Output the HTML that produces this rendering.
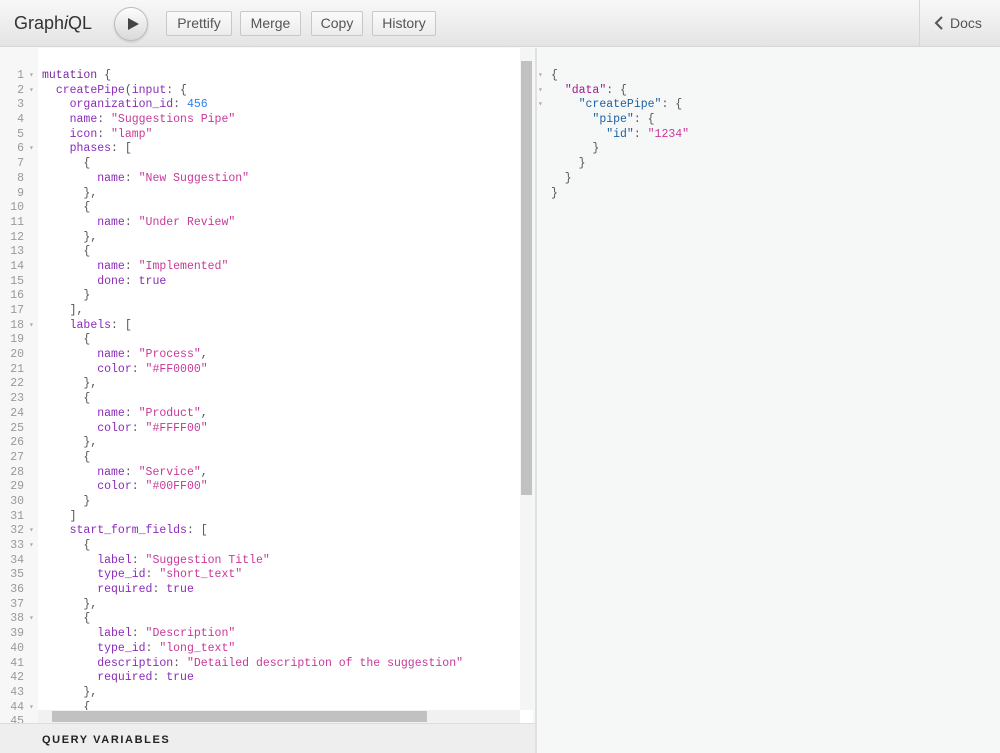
<!DOCTYPE html>
<html><head><style>
*{margin:0;padding:0;box-sizing:border-box}
body{width:1000px;height:753px;overflow:hidden;background:#f6f7f7;font-family:"Liberation Sans",sans-serif;position:relative}
.top{position:absolute;left:0;top:0;width:1000px;height:47px;background:linear-gradient(#f8f8f8,#e4e4e4);border-bottom:1px solid #d6d6d6}
.title{position:absolute;left:14px;top:13px;font-size:18px;color:#333}
.run{position:absolute;left:114px;top:7px;width:34px;height:34px;border-radius:50%;background:linear-gradient(#fdfdfd,#d9d9d9);border:1px solid #bbb;box-shadow:0 1px 2px rgba(0,0,0,.15)}
.run:after{content:"";position:absolute;left:13px;top:10px;border-left:11px solid #444;border-top:6.5px solid transparent;border-bottom:6.5px solid transparent}
.btn{position:absolute;top:11px;height:25px;border:1px solid #c8c8c8;background:linear-gradient(#fbfbfb,#ececec);font-size:14px;color:#555;line-height:23px;text-align:center;border-radius:2px}
.docs{position:absolute;left:919px;top:0;width:81px;height:47px;border-left:1px solid #d6d6d6;font-size:14px;color:#555;line-height:47px;padding-left:14px}
.gut{position:absolute;left:0;top:48px;width:38px;height:675px;background:#f7f7f7}
.ed{position:absolute;left:38px;top:48px;width:495px;height:675px;background:#fff}
.code{position:absolute;top:69px;font-family:"Liberation Mono",monospace;font-size:11.5px;line-height:14.68px;white-space:pre}
.ln{left:0;width:24px;text-align:right;color:#999}
.fd{left:29px;color:#aaa;font-size:8px}
.src{left:42px;color:#555}
.p{color:#8b2bb9}.s{color:#c8399a}.n{color:#2882f9}.k{color:#7b2a9e}
.vs{position:absolute;left:520px;top:48px;width:13px;height:662px;background:#f5f5f5}
.vt{position:absolute;left:521px;top:61px;width:11px;height:434px;background:#c1c1c1}
.hs{position:absolute;left:38px;top:710px;width:482px;height:13px;background:#f1f1f1}
.ht{position:absolute;left:52px;top:711px;width:375px;height:11px;background:#c1c1c1}
.qv{position:absolute;left:0;top:723px;width:535px;height:30px;background:#eeeeee;border-top:1px solid #ddd;font-size:11px;font-weight:bold;letter-spacing:1.6px;color:#222;padding:10px 0 0 42px}
.res{position:absolute;left:535px;top:48px;width:465px;height:705px;background:#f6f7f7;border-left:2px solid #e0e0e0}
.rc{position:absolute;top:69px;left:551px;font-family:"Liberation Mono",monospace;font-size:11.5px;line-height:14.68px;white-space:pre;color:#555}
.rf{position:absolute;top:69px;left:538px;font-family:"Liberation Mono",monospace;font-size:8px;line-height:14.68px;white-space:pre;color:#aaa}
</style></head><body>
<div class="top">
<div class="title">Graph<i>i</i>QL</div>
<div class="run"></div>
<div class="btn" style="left:166px;width:66px">Prettify</div>
<div class="btn" style="left:240px;width:61px">Merge</div>
<div class="btn" style="left:311px;width:52px">Copy</div>
<div class="btn" style="left:372px;width:64px">History</div>
<div class="docs"><svg width="10" height="14" style="vertical-align:-2px;margin-right:6px"><path d="M8 1L2 7l6 6" stroke="#555" stroke-width="2" fill="none"/></svg>Docs</div>
</div>
<div class="gut"></div><div class="ed"></div>
<div class="code ln">1
2
3
4
5
6
7
8
9
10
11
12
13
14
15
16
17
18
19
20
21
22
23
24
25
26
27
28
29
30
31
32
33
34
35
36
37
38
39
40
41
42
43
44
45</div>
<div class="code fd">▾
▾



▾











▾













▾
▾




▾





▾</div>
<div class="code src"><span class="k">mutation</span> {
  <span class="p">createPipe</span>(<span class="p">input</span>: {
    <span class="p">organization_id</span>: <span class="n">456</span>
    <span class="p">name</span>: <span class="s">"Suggestions Pipe"</span>
    <span class="p">icon</span>: <span class="s">"lamp"</span>
    <span class="p">phases</span>: [
      {
        <span class="p">name</span>: <span class="s">"New Suggestion"</span>
      },
      {
        <span class="p">name</span>: <span class="s">"Under Review"</span>
      },
      {
        <span class="p">name</span>: <span class="s">"Implemented"</span>
        <span class="p">done</span>: <span class="p">true</span>
      }
    ],
    <span class="p">labels</span>: [
      {
        <span class="p">name</span>: <span class="s">"Process"</span>,
        <span class="p">color</span>: <span class="s">"#FF0000"</span>
      },
      {
        <span class="p">name</span>: <span class="s">"Product"</span>,
        <span class="p">color</span>: <span class="s">"#FFFF00"</span>
      },
      {
        <span class="p">name</span>: <span class="s">"Service"</span>,
        <span class="p">color</span>: <span class="s">"#00FF00"</span>
      }
    ]
    <span class="p">start_form_fields</span>: [
      {
        <span class="p">label</span>: <span class="s">"Suggestion Title"</span>
        <span class="p">type_id</span>: <span class="s">"short_text"</span>
        <span class="p">required</span>: <span class="p">true</span>
      },
      {
        <span class="p">label</span>: <span class="s">"Description"</span>
        <span class="p">type_id</span>: <span class="s">"long_text"</span>
        <span class="p">description</span>: <span class="s">"Detailed description of the suggestion"</span>
        <span class="p">required</span>: <span class="p">true</span>
      },
      {</div>
<div class="vs"></div><div class="vt"></div>
<div class="hs"></div><div class="ht"></div>
<div class="qv">QUERY VARIABLES</div>
<div class="res"></div>
<div class="rf">▾
▾
▾</div>
<div class="rc">{
  <span style="color:#a0198f">"data"</span>: {
    <span style="color:#1f61a0">"createPipe"</span>: {
      <span style="color:#1f61a0">"pipe"</span>: {
        <span style="color:#1f61a0">"id"</span>: <span class="s">"1234"</span>
      }
    }
  }
}</div>
</body></html>
